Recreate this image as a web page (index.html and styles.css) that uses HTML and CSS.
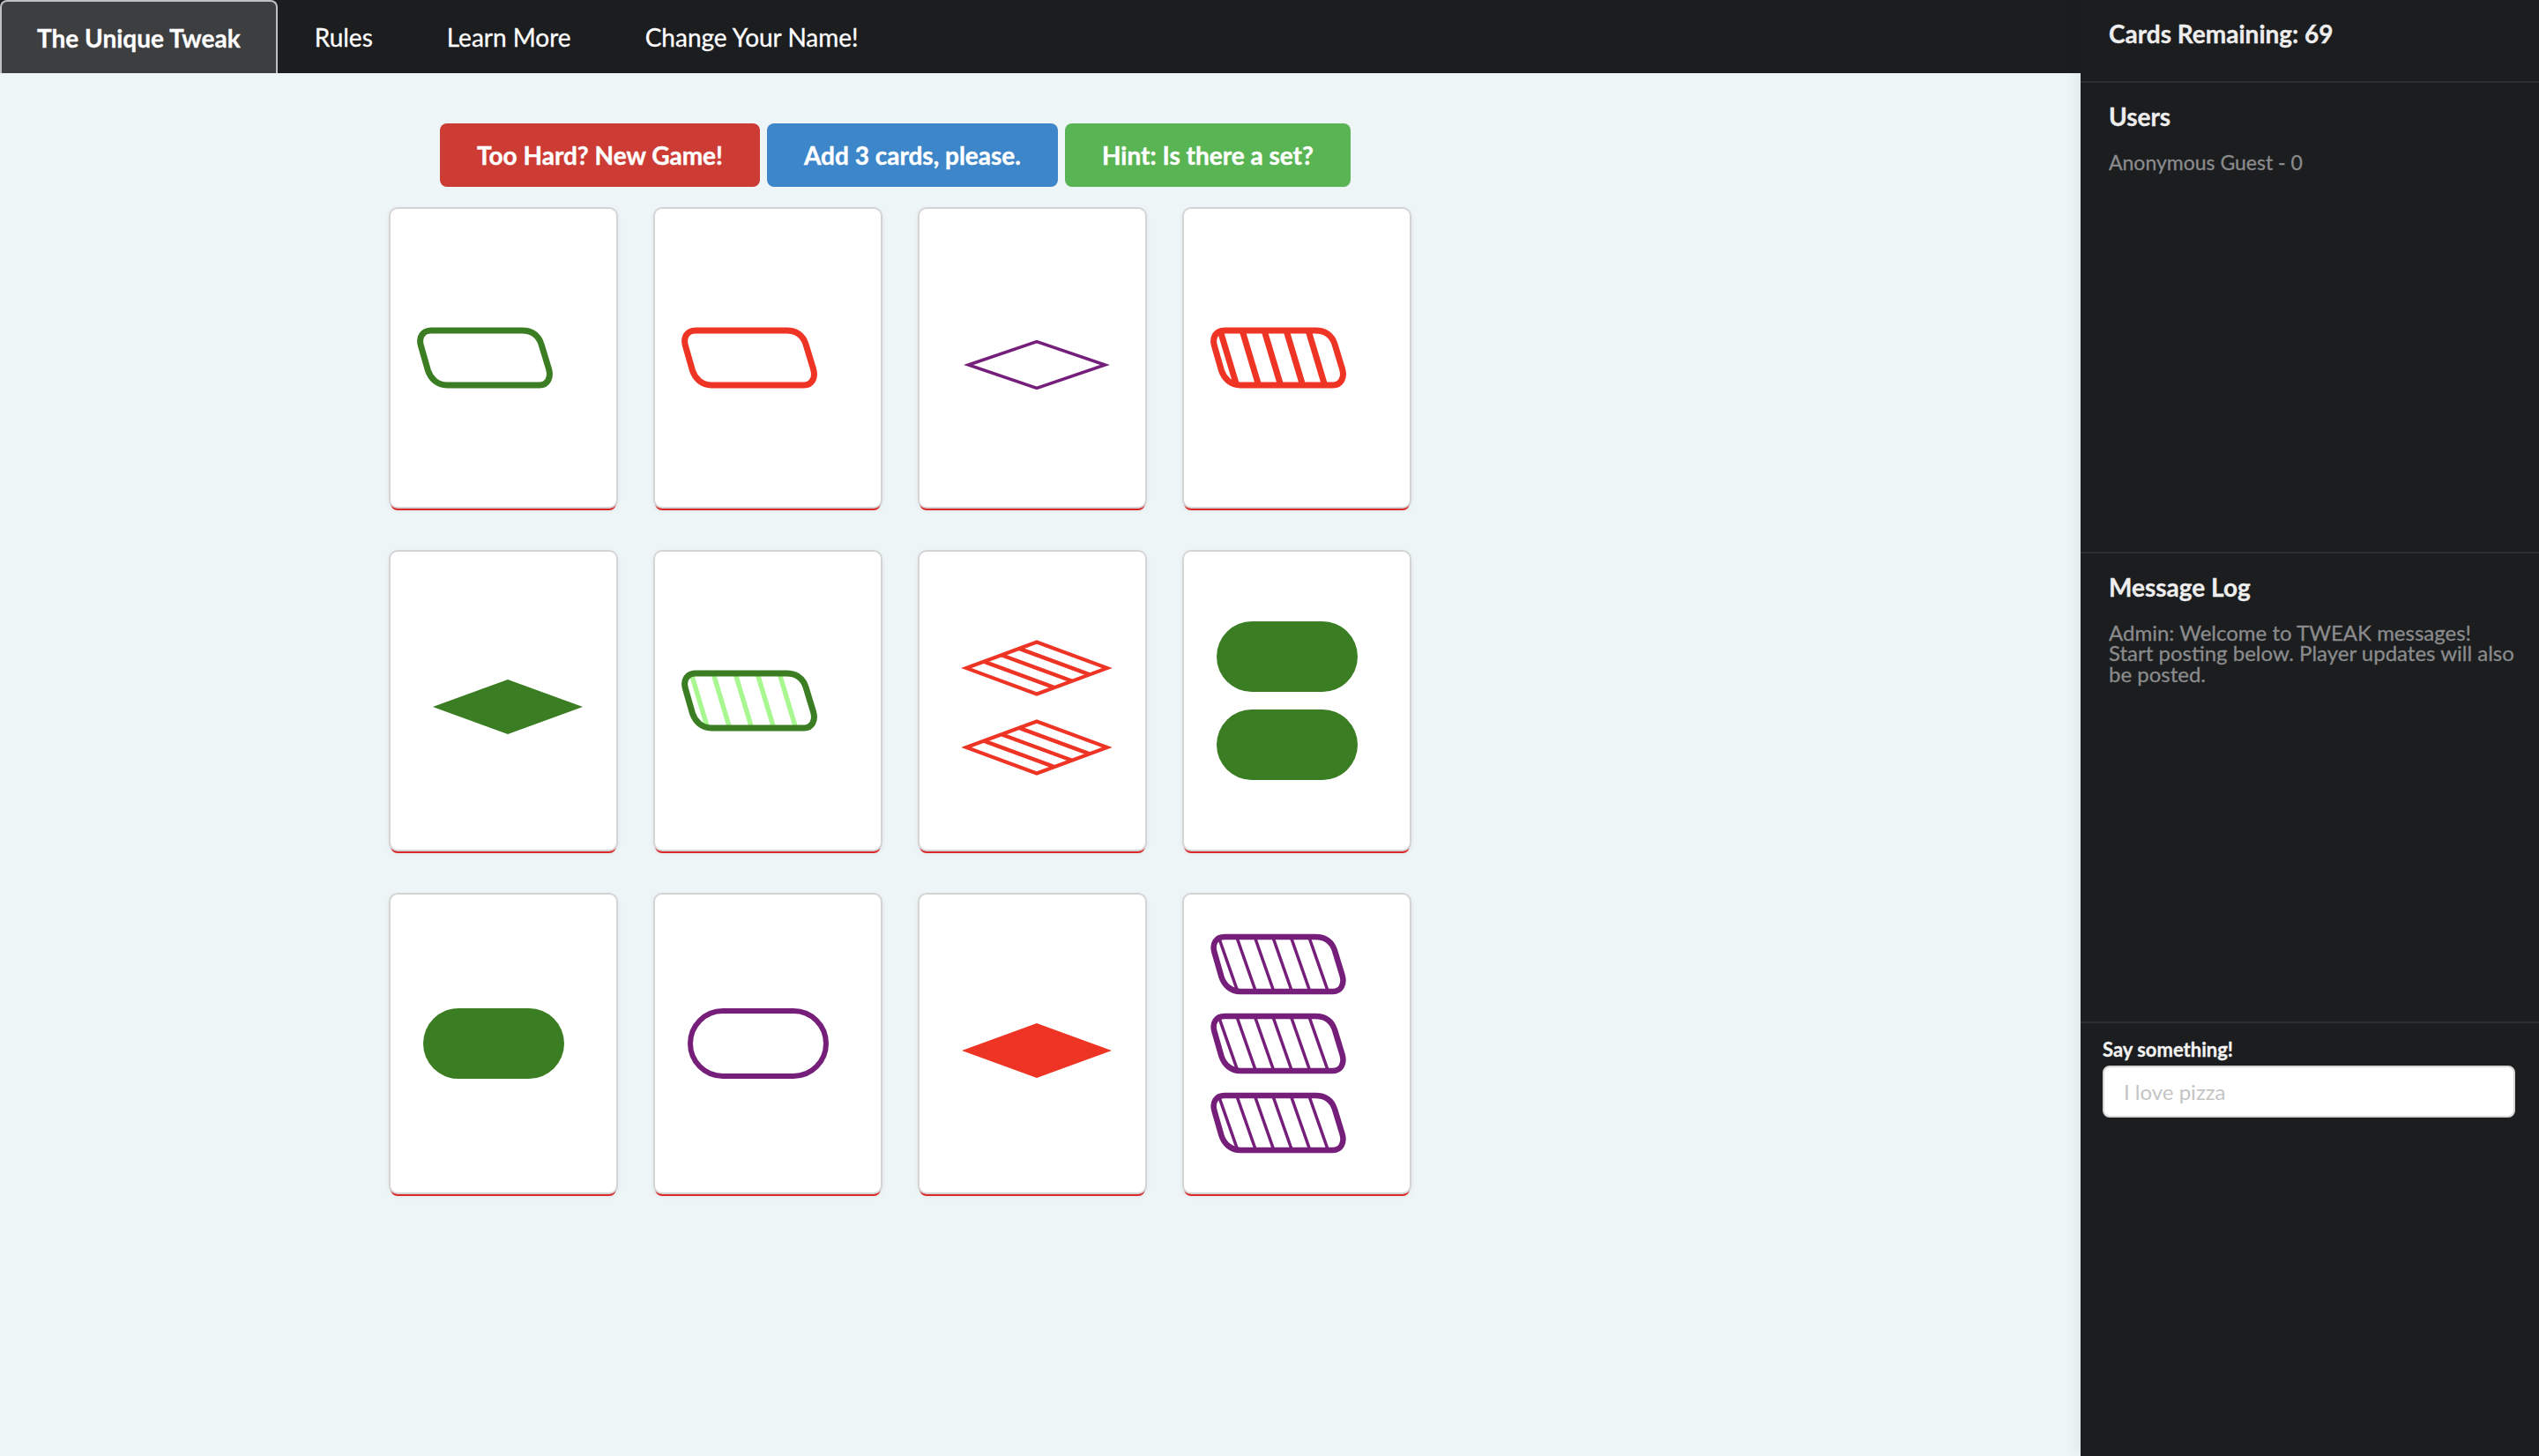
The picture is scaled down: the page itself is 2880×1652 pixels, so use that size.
FILE: index.html
```html
<!DOCTYPE html>
<html lang="en">
<head>
<meta charset="utf-8">
<title>The Unique Tweak</title>
<link rel="stylesheet" href="styles.css">
</head>
<body>
<svg class="defs" width="0" height="0" aria-hidden="true">
  <defs>
    <path id="sq" d="M 16 3.5 L 119 3.5 C 131 3.5 138 10 141 19 L 149.5 47 C 152.5 57 148 65.5 139 65.5 L 34 65.5 C 23 65.5 15.5 58 12.5 49 L 4.5 21 C 1.5 11 6.5 3.5 16 3.5 Z"/>
    <clipPath id="sqclip"><use href="#sq"/></clipPath>
    <path id="dm" d="M 25 53 L 105 23.5 L 185 53 L 105 82.5 Z"/>
    <clipPath id="dmclip"><use href="#dm"/></clipPath>
  </defs>
</svg>
<div class="app">
  <div class="main">
    <nav class="topnav">
      <a class="item active">The Unique Tweak</a>
      <a class="item">Rules</a>
      <a class="item">Learn More</a>
      <a class="item">Change Your Name!</a>
    </nav>
    <div class="board">
      <div class="actions">
        <button class="btn btn-red">Too Hard? New Game!</button>
        <button class="btn btn-blue">Add 3 cards, please.</button>
        <button class="btn btn-green">Hint: Is there a set?</button>
      </div>
      <div class="cards">
        <!-- 1 -->
        <div class="card">
          <svg class="shape" viewBox="0 0 200 90" width="200" height="90"><g transform="translate(2 10.5)"><use href="#sq" fill="none" stroke="#3a7d22" stroke-width="7"/></g></svg>
        </div>
        <!-- 2 -->
        <div class="card">
          <svg class="shape" viewBox="0 0 200 90" width="200" height="90"><g transform="translate(2 10.5)"><use href="#sq" fill="none" stroke="#ee3424" stroke-width="7"/></g></svg>
        </div>
        <!-- 3 -->
        <div class="card">
          <svg class="shape" viewBox="0 0 200 90" width="200" height="90"><polygon points="27.5,53 105,26.5 182.5,53 105,79.5" fill="none" stroke="#751f7a" stroke-width="3.5"/></svg>
        </div>
        <!-- 4 -->
        <div class="card">
          <svg class="shape" viewBox="0 0 200 90" width="200" height="90"><g transform="translate(2 10.5)"><g clip-path="url(#sqclip)"><path d="M8.5 -5L32.5 75M33.5 -5L57.5 75M58.5 -5L82.5 75M83.5 -5L107.5 75M108.5 -5L132.5 75" stroke="#ee3424" stroke-width="7"/></g><use href="#sq" fill="none" stroke="#ee3424" stroke-width="7"/></g></svg>
        </div>
        <!-- 5 -->
        <div class="card">
          <svg class="shape" viewBox="0 0 200 90" width="200" height="90"><polygon points="20,52 105,21 190,52 105,83" fill="#3a7d22"/></svg>
        </div>
        <!-- 6 -->
        <div class="card">
          <svg class="shape" viewBox="0 0 200 90" width="200" height="90"><g transform="translate(2 10.5)"><g clip-path="url(#sqclip)"><path d="M8.5 -5L32.5 75M33.5 -5L57.5 75M58.5 -5L82.5 75M83.5 -5L107.5 75M108.5 -5L132.5 75" stroke="#a8f790" stroke-width="5.5"/></g><use href="#sq" fill="none" stroke="#3a7d22" stroke-width="7"/></g></svg>
        </div>
        <!-- 7 -->
        <div class="card">
          <svg class="shape" viewBox="0 0 200 90" width="200" height="90"><g clip-path="url(#dmclip)"><path d="M45 45.6L125 75.1M65 38.25L145 67.75M85 30.9L165 60.4" stroke="#ee3424" stroke-width="4.5"/></g><use href="#dm" fill="none" stroke="#ee3424" stroke-width="4"/></svg>
          <svg class="shape" viewBox="0 0 200 90" width="200" height="90"><g clip-path="url(#dmclip)"><path d="M45 45.6L125 75.1M65 38.25L145 67.75M85 30.9L165 60.4" stroke="#ee3424" stroke-width="4.5"/></g><use href="#dm" fill="none" stroke="#ee3424" stroke-width="4"/></svg>
        </div>
        <!-- 8 -->
        <div class="card">
          <svg class="shape" viewBox="0 0 200 100" width="200" height="100"><rect x="9" y="10" width="160" height="80" rx="40" fill="#3a7d22"/></svg>
          <svg class="shape" viewBox="0 0 200 100" width="200" height="100"><rect x="9" y="10" width="160" height="80" rx="40" fill="#3a7d22"/></svg>
        </div>
        <!-- 9 -->
        <div class="card">
          <svg class="shape" viewBox="0 0 200 100" width="200" height="100"><rect x="9" y="10" width="160" height="80" rx="40" fill="#3a7d22"/></svg>
        </div>
        <!-- 10 -->
        <div class="card">
          <svg class="shape" viewBox="0 0 200 100" width="200" height="100"><rect x="12" y="13" width="154" height="74" rx="37" fill="none" stroke="#751f7a" stroke-width="6"/></svg>
        </div>
        <!-- 11 -->
        <div class="card">
          <svg class="shape" viewBox="0 0 200 90" width="200" height="90"><polygon points="20,53 105,22 190,53 105,84" fill="#ee3424"/></svg>
        </div>
        <!-- 12 -->
        <div class="card">
          <svg class="shape" viewBox="0 0 200 90" width="200" height="90"><g transform="translate(2 10.5)"><g clip-path="url(#sqclip)"><path d="M6.25 -5L34.25 75M26.75 -5L54.75 75M47.25 -5L75.25 75M67.75 -5L95.75 75M88.25 -5L116.25 75M108.75 -5L136.75 75" stroke="#751f7a" stroke-width="3.5"/></g><use href="#sq" fill="none" stroke="#751f7a" stroke-width="6.5"/></g></svg>
          <svg class="shape" viewBox="0 0 200 90" width="200" height="90"><g transform="translate(2 10.5)"><g clip-path="url(#sqclip)"><path d="M6.25 -5L34.25 75M26.75 -5L54.75 75M47.25 -5L75.25 75M67.75 -5L95.75 75M88.25 -5L116.25 75M108.75 -5L136.75 75" stroke="#751f7a" stroke-width="3.5"/></g><use href="#sq" fill="none" stroke="#751f7a" stroke-width="6.5"/></g></svg>
          <svg class="shape" viewBox="0 0 200 90" width="200" height="90"><g transform="translate(2 10.5)"><g clip-path="url(#sqclip)"><path d="M6.25 -5L34.25 75M26.75 -5L54.75 75M47.25 -5L75.25 75M67.75 -5L95.75 75M88.25 -5L116.25 75M108.75 -5L136.75 75" stroke="#751f7a" stroke-width="3.5"/></g><use href="#sq" fill="none" stroke="#751f7a" stroke-width="6.5"/></g></svg>
        </div>
      </div>
    </div>
  </div>
  <aside class="sidebar">
    <section class="sb-section sb-count"><h3 class="sb-title">Cards Remaining: 69</h3></section>
    <section class="sb-section sb-users">
      <h3 class="sb-title">Users</h3>
      <div class="user">Anonymous Guest - 0</div>
    </section>
    <section class="sb-section sb-log">
      <h3 class="sb-title">Message Log</h3>
      <p class="log-text">Admin: Welcome to TWEAK messages! Start posting below. Player updates will also be posted.</p>
    </section>
    <section class="sb-section sb-say">
      <label class="say-label" for="say">Say something!</label>
      <input id="say" class="say-input" type="text" placeholder="I love pizza">
    </section>
  </aside>
</div>
</body>
</html>
```
FILE: styles.css
```css
html, body {
  margin: 0;
  padding: 0;
}

body {
  font-family: Lato, "Noto Sans", "Liberation Sans", sans-serif;
  background: #edf5f7;
  -webkit-text-stroke: 0.3px currentColor;
}

.defs {
  position: absolute;
  width: 0;
  height: 0;
  overflow: hidden;
}

.app {
  display: flex;
  height: 1652px;
}

.main {
  flex: 1;
  min-width: 0;
  display: flex;
  flex-direction: column;
  background: #edf5f7;
}

/* top navigation */
.topnav {
  height: 83px;
  flex: none;
  background: #1c1d1f;
  display: flex;
  align-items: stretch;
}

.topnav .item {
  display: flex;
  align-items: center;
  padding: 0 42px;
  color: #ffffff;
  font-size: 28px;
  text-decoration: none;
  white-space: nowrap;
}

.topnav .item.active {
  background: #3d3e40;
  font-weight: 700;
  border: 2px solid #bfc0c1;
  border-bottom: none;
  border-radius: 8px 8px 0 0;
  padding: 0 40px;
}

/* board */
.board {
  width: 2042px;
  display: flex;
  flex-direction: column;
  align-items: center;
  padding-top: 57px;
}

.actions {
  display: flex;
  gap: 8px;
  padding-right: 11px;
}

.btn {
  font-family: Lato, "Noto Sans", sans-serif;
  font-weight: 700;
  font-size: 28px;
  line-height: 28px;
  color: #ffffff;
  border: 0;
  border-radius: 8px;
  padding: 22px 42px;
  white-space: nowrap;
  -webkit-text-stroke: 0.4px #ffffff;
}

.btn-red { background: #cc3b34; }
.btn-blue { background: #3d86ca; }
.btn-green { background: #59b454; }

.cards {
  margin-top: 25px;
  display: grid;
  grid-template-columns: repeat(4, 256px);
  grid-auto-rows: 338px;
  column-gap: 44px;
  row-gap: 51px;
}

.card {
  background: #ffffff;
  border-radius: 8px;
  box-shadow: 0 0 0 2px #d4d4d5, 0 4px 0 0 #db2828, 0 2px 6px 0 #d4d4d5;
  display: flex;
  flex-direction: column;
  align-items: center;
  justify-content: center;
}

.shape {
  display: block;
  flex: none;
}

/* sidebar */
.sidebar {
  width: 520px;
  flex: none;
  background: #1c1d1f;
  color: #ececec;
  display: flex;
  flex-direction: column;
  box-shadow: -6px 0 14px rgba(0, 0, 0, 0.05);
}

.sb-section {
  box-sizing: border-box;
  border-bottom: 2px solid #2d2e30;
  padding: 21px 24px 0 32px;
}

.sb-count { height: 94px; flex: none; padding-top: 22px; }
.sb-users { height: 534px; flex: none; padding-top: 22px; }
.sb-log { height: 533px; flex: none; padding-top: 22px; }

.sb-say {
  flex: 1;
  border-bottom: none;
  padding: 17px 26px 0 25px;
}

.sb-title {
  margin: 0;
  font-size: 28px;
  line-height: 1.2;
  font-weight: 700;
  color: #eeeeee;
}

.sb-users .sb-title,
.sb-log .sb-title {
  margin-bottom: 22px;
}

.user {
  font-size: 23px;
  line-height: 24px;
  color: #8a8b8c;
}

.log-text {
  margin: 0;
  font-size: 24px;
  line-height: 23.5px;
  color: #8a8b8c;
}

.say-label {
  display: block;
  font-size: 22px;
  line-height: 1.2;
  font-weight: 700;
  color: #f4f4f4;
  margin-bottom: 5px;
}

.say-input {
  display: block;
  box-sizing: border-box;
  width: 468px;
  height: 59px;
  border: 2px solid #d6d6d6;
  border-radius: 8px;
  padding: 0 22px;
  font-family: Lato, "Noto Sans", sans-serif;
  font-size: 24px;
  color: #333333;
  background: #ffffff;
  outline: none;
  -webkit-text-stroke: 0;
}

.say-input::placeholder {
  color: #c4c4c4;
}
```
